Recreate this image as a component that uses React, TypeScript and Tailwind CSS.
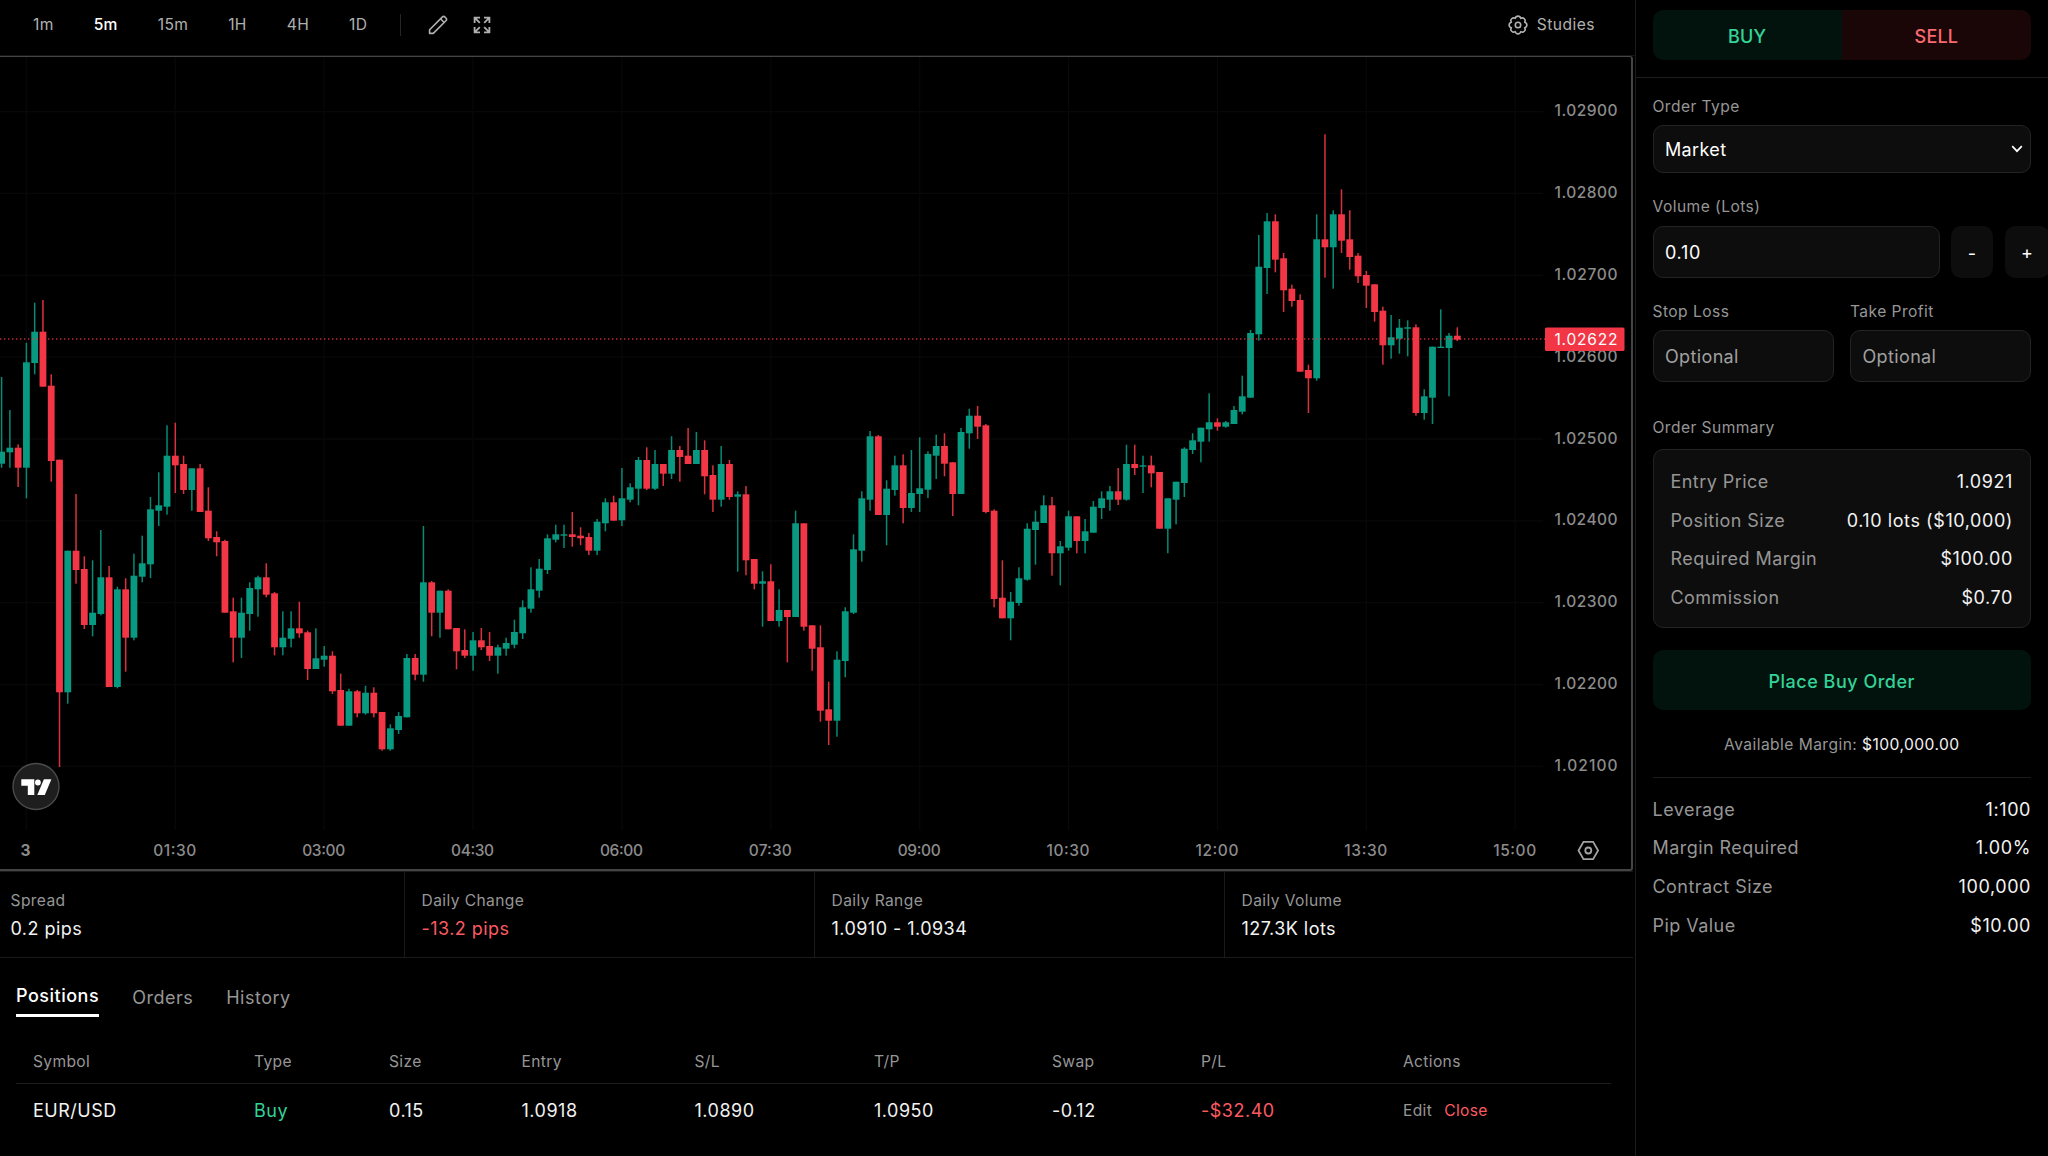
import { useState, type ReactNode } from 'react'
import clsx from 'clsx'

type Candle = [dir: 'u' | 'd', high: number, top: number, bottom: number, low: number]

// wick and body edges on the chart canvas, one entry per 5 minute bar
const CANDLES: Candle[] = [
  ['u', 377, 451.7, 463.7, 467.7],
  ['u', 410, 447.7, 452.3, 467.7],
  ['d', 444.3, 447.7, 467.7, 487],
  ['u', 342.7, 362.3, 467.7, 498.3],
  ['u', 302.7, 331.7, 363, 374.3],
  ['d', 300, 331.7, 386.7, 386.7],
  ['d', 374.3, 385.7, 461, 481.7],
  ['d', 459.7, 459.7, 692.3, 767],
  ['u', 550.7, 550.7, 692.3, 703.7],
  ['d', 494, 550.7, 570, 583.7],
  ['d', 556.3, 569, 625, 629],
  ['u', 560.3, 612.7, 625, 636.3],
  ['u', 530, 577.3, 614, 615.3],
  ['d', 566, 577.3, 687, 687],
  ['u', 586.7, 589.3, 687, 688.3],
  ['d', 578.3, 589.3, 637.7, 671.7],
  ['u', 553.7, 575.7, 637.7, 640.3],
  ['u', 535.7, 563.3, 576.7, 582.3],
  ['u', 497, 509.3, 564.3, 578],
  ['u', 472.3, 505.3, 510.7, 526],
  ['u', 425.3, 455.7, 506.7, 514.7],
  ['d', 422.7, 455.7, 465.3, 493],
  ['d', 455.7, 464, 490, 494],
  ['u', 468.3, 468.3, 490, 510.7],
  ['d', 464, 468.3, 512, 512],
  ['d', 487.3, 510.7, 538.3, 541],
  ['d', 531.3, 537, 542.3, 556.3],
  ['d', 539.7, 541, 612.7, 612.7],
  ['d', 597.7, 611.3, 637.7, 662.3],
  ['u', 597.7, 612.7, 637.7, 658],
  ['u', 582.3, 588, 614, 630.7],
  ['u', 575.7, 577.3, 589.3, 616.7],
  ['d', 563.3, 577.3, 594.7, 597.3],
  ['d', 592, 593.3, 647.3, 655.3],
  ['u', 611.3, 637.7, 647.3, 655.3],
  ['u', 611.3, 628.3, 638.7, 647.3],
  ['d', 601.7, 628.3, 633.3, 637.7],
  ['d', 630.7, 632.3, 669, 680],
  ['u', 628.3, 658.3, 669, 669],
  ['u', 646, 655.7, 659.7, 666.7],
  ['d', 651.3, 655.7, 691.3, 694],
  ['d', 673.7, 690, 725.7, 725.7],
  ['u', 688.7, 691.3, 725.7, 725.7],
  ['d', 690, 691.3, 713.3, 717.3],
  ['u', 685.7, 692.7, 713.3, 714.7],
  ['d', 687.3, 692.7, 713.3, 717.3],
  ['d', 712, 712, 749.3, 750.7],
  ['u', 724.3, 728.3, 749.3, 750.7],
  ['u', 712, 716, 730, 734],
  ['u', 654, 658, 717.3, 717.3],
  ['d', 654, 658, 674.7, 680.3],
  ['u', 526, 582.3, 674.7, 681.7],
  ['d', 581, 582.3, 612.7, 636.3],
  ['u', 590.7, 590.7, 612.7, 637.7],
  ['d', 589.3, 590.7, 629.3, 629.3],
  ['d', 628, 628, 651.3, 669.3],
  ['d', 629.3, 650, 655.7, 658],
  ['u', 632, 640.3, 655.7, 670.7],
  ['d', 628, 640.3, 647.3, 650],
  ['d', 632, 646, 655.7, 661],
  ['u', 644.7, 647.3, 655.7, 673.7],
  ['u', 637.7, 643, 648.7, 655.7],
  ['u', 619.7, 632, 644.7, 648.3],
  ['u', 600.3, 607.3, 633.3, 639],
  ['u', 567.3, 589.3, 608.7, 612.7],
  ['u', 559, 568.7, 590.7, 597.7],
  ['u', 534.3, 538.3, 570, 574],
  ['u', 524.7, 534.3, 539.7, 542.3],
  ['u', 524.7, 534.3, 535.7, 548],
  ['d', 512, 534.3, 537, 546.7],
  ['d', 527.3, 535.7, 538.3, 545.3],
  ['d', 533, 537, 550.7, 555],
  ['u', 519, 521.7, 550.7, 555],
  ['u', 498.3, 502.3, 523.3, 531.3],
  ['d', 495.7, 502.3, 520.7, 520.7],
  ['u', 468, 498.3, 520.3, 526],
  ['u', 483.3, 487.3, 499.7, 502.3],
  ['u', 457, 460, 488.7, 505.3],
  ['d', 447.3, 460, 488.7, 490],
  ['u', 450, 464, 488.7, 490],
  ['d', 464, 464, 473.7, 486],
  ['u', 436.3, 450, 473.7, 479],
  ['d', 446, 450, 457, 481.7],
  ['d', 428, 455.7, 464, 464],
  ['u', 432, 450, 464, 464],
  ['d', 440.3, 450, 476.3, 494.3],
  ['d', 465.3, 475, 499.7, 512],
  ['u', 446, 464, 499.7, 506.7],
  ['d', 460, 464, 497, 499.7],
  ['u', 491.3, 494.3, 496.7, 571.7],
  ['d', 486, 494.3, 560.3, 575.3],
  ['d', 559, 559, 583.7, 589.3],
  ['u', 571.3, 581.3, 583.7, 626.7],
  ['d', 564.3, 581.3, 621, 621],
  ['u', 589.3, 610, 621, 626.7],
  ['d', 610, 610, 617, 662.3],
  ['u', 510.7, 523.3, 617, 617],
  ['d', 523.3, 523.3, 626.7, 630.7],
  ['d', 625.3, 625.3, 648.7, 670.7],
  ['d', 625.3, 647.3, 710.7, 721.7],
  ['d', 681.7, 709.3, 720.7, 745],
  ['u', 651.3, 659.7, 720.7, 736.7],
  ['u', 607.3, 611.3, 661, 677.3],
  ['u', 534.3, 549.3, 612.7, 614],
  ['u', 491.3, 498.3, 550.7, 561.7],
  ['u', 431, 436.3, 499.7, 510.7],
  ['d', 435, 436.3, 515, 515],
  ['u', 480.3, 488.7, 515, 545.3],
  ['u', 455.7, 465.3, 490, 495.7],
  ['d', 454.3, 465.3, 508, 523.3],
  ['u', 450, 493, 508, 512],
  ['u', 437.3, 488.3, 494, 512],
  ['u', 451.3, 454, 489.7, 498],
  ['u', 434.7, 446, 455.7, 479],
  ['d', 433.3, 446, 463.7, 476.3],
  ['d', 462.3, 462.3, 494, 516],
  ['u', 428, 432, 494, 494],
  ['u', 408.7, 415.7, 433.3, 448.7],
  ['d', 406, 415.7, 426.7, 439],
  ['d', 424, 425.3, 512, 513.3],
  ['d', 509.3, 510.7, 599, 607.3],
  ['d', 560.3, 597.7, 618.3, 618.3],
  ['u', 592, 601.7, 618.3, 640.3],
  ['u', 567.3, 578.3, 603, 605.7],
  ['u', 523.3, 528.7, 579.7, 580.7],
  ['u', 510.7, 521.7, 530, 564.7],
  ['u', 495.3, 505.3, 523, 523],
  ['d', 497, 505.3, 553.3, 575.7],
  ['u', 541, 546.3, 553.3, 585.3],
  ['u', 510.7, 516.3, 547.7, 550.7],
  ['d', 516.3, 516.3, 541, 553.3],
  ['u', 519, 531.3, 541, 553.3],
  ['u', 501, 506.7, 532.7, 532.7],
  ['u', 491.3, 498.3, 508, 519],
  ['u', 486, 491.3, 499.7, 510.7],
  ['d', 468, 491.3, 499.7, 505],
  ['u', 444.7, 464, 499.7, 500.7],
  ['d', 444.7, 464, 468, 475],
  ['u', 455.7, 465.3, 466.7, 493],
  ['d', 455.7, 465.3, 473.3, 487.3],
  ['d', 472, 472, 528.7, 528.7],
  ['u', 498.3, 498.3, 528.7, 553.3],
  ['u', 481.7, 481.7, 499.7, 524.3],
  ['u', 447.3, 448.7, 483, 497],
  ['u', 433.3, 440.3, 450, 454],
  ['u', 427.7, 427.7, 441.7, 462.3],
  ['u', 393.3, 422.3, 429.3, 441.7],
  ['d', 418.3, 422.3, 426.7, 430.7],
  ['u', 421, 422.3, 426.7, 427.7],
  ['u', 406, 410, 424, 424],
  ['u', 375.7, 396.3, 411.7, 414.3],
  ['u', 330, 333, 397.7, 397.7],
  ['u', 235, 266.7, 334.3, 340.7],
  ['u', 213, 221.3, 268, 294],
  ['d', 214.3, 221.3, 259.7, 272.3],
  ['d', 253, 258.3, 290.3, 312],
  ['d', 284.7, 288.7, 301, 306.7],
  ['d', 294.3, 300, 371.7, 371.7],
  ['d', 364.7, 370, 378.3, 413],
  ['u', 214.3, 239.3, 378.3, 380.7],
  ['d', 134.3, 239.3, 247.3, 277.7],
  ['u', 210.3, 214.3, 247.3, 288.7],
  ['d', 189.3, 214.3, 240.7, 253],
  ['d', 210.3, 239.3, 257, 269.7],
  ['d', 253, 255.7, 276.3, 283],
  ['d', 271, 275, 285.7, 308],
  ['d', 284.3, 284.3, 312, 321.7],
  ['d', 306.7, 310.7, 345.3, 364.7],
  ['u', 315, 337.3, 345.3, 358.7],
  ['u', 319, 327.7, 338.7, 353.7],
  ['u', 320.3, 327.3, 328.7, 356.3],
  ['d', 324.3, 327.3, 413, 415.7],
  ['u', 389.3, 396.3, 413, 419.7],
  ['u', 346.7, 346.7, 397.7, 424],
  ['u', 309.3, 346.7, 348, 348],
  ['u', 333, 335.7, 348, 396.3],
  ['d', 327.3, 335.7, 339.7, 341],
]

const FIRST_X = 1.6
const BAR_STEP = 8.271
const UP = '#089981'
const DOWN = '#f23645'

const PRICES = ['1.02900', '1.02800', '1.02700', '1.02600', '1.02500', '1.02400', '1.02300', '1.02200', '1.02100']
const TIMES = ['3', '01:30', '03:00', '04:30', '06:00', '07:30', '09:00', '10:30', '12:00', '13:30', '15:00']

const priceY = (i: number) => 111.6 + i * 81.85
const timeX = (i: number) => 26.4 + i * 148.88

const TIMEFRAMES = ['1m', '5m', '15m', '1H', '4H', '1D']

const STATS = [
  { label: 'Spread', value: '0.2 pips' },
  { label: 'Daily Change', value: '-13.2 pips', negative: true },
  { label: 'Daily Range', value: '1.0910 - 1.0934' },
  { label: 'Daily Volume', value: '127.3K lots' },
]

const SUMMARY = [
  ['Entry Price', '1.0921'],
  ['Position Size', '0.10 lots ($10,000)'],
  ['Required Margin', '$100.00'],
  ['Commission', '$0.70'],
]

const CONTRACT = [
  ['Leverage', '1:100'],
  ['Margin Required', '1.00%'],
  ['Contract Size', '100,000'],
  ['Pip Value', '$10.00'],
]

function PencilIcon() {
  return (
    <svg width="20" height="20" viewBox="0 0 20 20" fill="none" stroke="currentColor" strokeWidth="1.6" strokeLinejoin="round">
      <path d="M1.6 18.4V14.7L14.2 2.1a2 2 0 0 1 2.8 0l.9.9a2 2 0 0 1 0 2.8L5.3 18.4H1.6Z" />
      <path d="M12.5 3.8l3.7 3.7" />
    </svg>
  )
}

function ExpandIcon() {
  return (
    <svg width="18" height="18" viewBox="0 0 18 18" fill="none" stroke="currentColor" strokeWidth="1.8">
      <path d="M1.6 7V1.6H7M1.6 1.6 6.8 6.8" />
      <path d="M11 1.6h5.4V7M16.4 1.6l-5.2 5.2" />
      <path d="M1.6 11v5.4H7M1.6 16.4l5.2-5.2" />
      <path d="M11 16.4h5.4V11M16.4 16.4l-5.2-5.2" />
    </svg>
  )
}

function GearIcon() {
  return (
    <svg width="20" height="20" viewBox="0 0 20 20" fill="none" stroke="currentColor" strokeWidth="1.6" strokeLinejoin="round">
      <path d="M16.65 12.75A2.82 2.82 0 0 1 12.75 16.65A2.82 2.82 0 0 1 7.25 16.65A2.82 2.82 0 0 1 3.35 12.75A2.82 2.82 0 0 1 3.35 7.25A2.82 2.82 0 0 1 7.25 3.35A2.82 2.82 0 0 1 12.75 3.35A2.82 2.82 0 0 1 16.65 7.25A2.82 2.82 0 0 1 16.65 12.75Z" />
      <circle cx="10" cy="10" r="2.7" />
    </svg>
  )
}

function PriceChart() {
  return (
    <svg width="1631" height="812" viewBox="0 57 1631 812" className="block">
      <g stroke="#080808" strokeWidth="1.3">
        {PRICES.map((p, i) => (
          <line key={p} x1="0" x2="1543" y1={priceY(i)} y2={priceY(i)} />
        ))}
        {TIMES.map((t, i) => (
          <line key={t} x1={timeX(i)} x2={timeX(i)} y1="57" y2="830" />
        ))}
      </g>

      {CANDLES.map(([dir, high, top, bottom, low], i) => {
        const x = FIRST_X + i * BAR_STEP
        const color = dir === 'u' ? UP : DOWN
        return (
          <g key={i} fill={color}>
            <rect x={x - 0.75} y={high} width="1.5" height={low - high} opacity="0.9" />
            <rect x={x - 3.4} y={top} width="6.8" height={bottom - top} />
          </g>
        )
      })}

      <line x1="0" x2="1545" y1="339" y2="339" stroke={DOWN} strokeWidth="1.4" strokeDasharray="1.4 2.6" opacity="0.8" />

      <g fill="#8c8c8c" fontSize="15.5" fontWeight="500">
        {PRICES.map((p, i) => (
          <text key={p} x="1554.5" y={priceY(i) + 4.6} textLength="63">
            {p}
          </text>
        ))}
        {TIMES.map((t, i) =>
          i === 0 ? (
            <text key={t} x={timeX(i) - 0.8} y="856.4" textAnchor="middle" fontWeight="700">
              {t}
            </text>
          ) : (
            <text key={t} x={timeX(i) - 22} y="856.4" textLength="43">
              {t}
            </text>
          ),
        )}
      </g>

      <rect x="1545" y="327.5" width="79.5" height="23.5" rx="1.5" fill={DOWN} />
      <text x="1554.5" y="345" textLength="63" fontSize="15.5" fill="#fff">
        1.02622
      </text>

      <g fill="none" stroke="#a3a3a3" strokeWidth="1.8">
        <path d="M1583.5 841.8h9.6l5 8.700-5 8.700h-9.600l-5-8.700Z" />
        <circle cx="1588.3" cy="850.5" r="3" />
      </g>

      <circle cx="36" cy="786.5" r="23" fill="#1e1e1e" stroke="#4a4a4a" strokeWidth="1.4" />
      <g fill="#fff">
        <path d="M21.3 779.3h13v15.7h-6.5v-9.3h-6.5Z" />
        <circle cx="37.9" cy="782.5" r="2.9" />
        <path d="M43.9 779.3h7.5l-6.6 15.7h-7.5Z" />
      </g>
    </svg>
  )
}

function Row({ label, value }: { label: string; value: string }) {
  return (
    <div className="flex h-[38.6px] items-center justify-between text-[18px]">
      <span className="tracking-[0.025em] text-[#969696]">{label}</span>
      <span className="tracking-[0.032em] text-[#f2f2f2]">{value}</span>
    </div>
  )
}

function FieldLabel({ children }: { children: ReactNode }) {
  return <label className="block h-5 text-[15.6px] leading-5 tracking-[0.028em] text-[#969696]">{children}</label>
}

function OrderPanel() {
  return (
    <aside className="flex w-[413px] shrink-0 flex-col border-l border-[#1c1c1c]">
      <div className="h-[78px] border-b border-[#1c1c1c] pt-2.5 pl-[16.5px]">
        <div className="flex h-[50px] w-[378.5px] overflow-hidden rounded-[10px] text-[18px] font-medium tracking-[0.01em]">
          <button className="flex-1 bg-[#02130d] pt-[2px] text-[#34d399]">BUY</button>
          <button className="flex-1 bg-[#1b0607] pt-[2px] text-[#fb6a70]">SELL</button>
        </div>
      </div>

      <div className="flex flex-col pt-[19px] pl-[16.5px]">
        <FieldLabel>Order Type</FieldLabel>
        <button className="mt-2 flex h-[48px] w-[378.5px] items-center justify-between rounded-[10px] border border-[#232323] bg-[#0d0d0d] pr-[7px] pl-[11.5px] text-[18px] tracking-[0.02em] text-white">
          Market
          <svg width="12" height="8" viewBox="0 0 12 8" fill="none" stroke="currentColor" strokeWidth="1.7">
            <path d="M1.2 1.2 6 6.2l4.8-5" />
          </svg>
        </button>

        <div className="mt-6">
          <FieldLabel>Volume (Lots)</FieldLabel>
        </div>
        <div className="mt-[9px] flex gap-[11.5px] text-[18px] text-white">
          <div className="flex h-[52px] w-[287px] shrink-0 items-center rounded-[10px] border border-[#232323] bg-[#0d0d0d] pt-px pl-[11.5px] tracking-[0.04em]">
            0.10
          </div>
          <button className="h-[52px] w-[42px] shrink-0 rounded-[10px] bg-[#0d0d0d] pt-[2px]">-</button>
          <button className="h-[52px] w-[45px] shrink-0 rounded-[10px] bg-[#0d0d0d] pt-px">+</button>
        </div>

        <div className="mt-6 grid w-[378.5px] grid-cols-2 gap-[16.5px]">
          {['Stop Loss', 'Take Profit'].map((label) => (
            <div key={label}>
              <FieldLabel>{label}</FieldLabel>
              <div className="mt-2 flex h-[52px] items-center rounded-[10px] border border-[#232323] bg-[#0d0d0d] pt-px pl-[11.5px] text-[18px] tracking-[0.02em] text-[#a0a0a0]">
                Optional
              </div>
            </div>
          ))}
        </div>

        <div className="mt-[36px]">
          <FieldLabel>Order Summary</FieldLabel>
        </div>
        <div className="mt-[11px] flex h-[179px] w-[378.5px] flex-col justify-center rounded-[10px] border border-[#232323] bg-[#0d0d0d] px-[17px] pt-[2px]">
          {SUMMARY.map(([label, value]) => (
            <Row key={label} label={label} value={value} />
          ))}
        </div>

        <button className="mt-[22px] h-[60px] w-[378.5px] rounded-[10px] bg-[#02130d] pt-[2px] text-[18px] font-medium tracking-[0.028em] text-[#34d399]">
          Place Buy Order
        </button>

        <p className="mt-[25px] w-[378.5px] text-center text-[15.6px] leading-5 tracking-[0.028em] text-[#969696]">
          Available Margin: <span className="text-[#f2f2f2]">$100,000.00</span>
        </p>

        <div className="mt-[22px] w-[378.5px] border-t border-[#1c1c1c] pt-3">
          {CONTRACT.map(([label, value]) => (
            <Row key={label} label={label} value={value} />
          ))}
        </div>
      </div>
    </aside>
  )
}

export default function App() {
  const [timeframe, setTimeframe] = useState('5m')
  const [tab, setTab] = useState('Positions')

  return (
    <div className="flex h-[1156px] w-[2048px] overflow-hidden bg-black font-[Inter,sans-serif] text-[#f2f2f2]">
      <main className="flex w-[1635px] shrink-0 flex-col">
        <header className="flex h-14 shrink-0 items-center border-b border-[#161616] pb-[5px] text-[15.6px] tracking-[0.02em] text-[#b0b0b0]">
          <div className="flex gap-10 pl-[33px]">
            {TIMEFRAMES.map((tf) => (
              <button key={tf} onClick={() => setTimeframe(tf)} className={clsx(tf === timeframe && 'font-medium text-white')}>
                {tf}
              </button>
            ))}
          </div>
          <div className="ml-[33px] h-[22px] w-px bg-[#262626]" />
          <button className="ml-[27px]">
            <PencilIcon />
          </button>
          <button className="ml-[25px]">
            <ExpandIcon />
          </button>
          <button className="mr-[40px] ml-auto flex items-center gap-[9px] tracking-[0.03em]">
            <GearIcon />
            Studies
          </button>
        </header>

        <section className="h-[815px] w-[1633px] shrink-0 rounded-r-[3px] border-t border-r-2 border-b-2 border-[#444]">
          <PriceChart />
        </section>

        <section className="grid h-[87px] w-[1633px] shrink-0 grid-cols-[405px_410px_410px_1fr] border-y border-[#1a1a1a]">
          {STATS.map((stat, i) => (
            <div key={stat.label} className={clsx('pt-[19px]', i === 0 ? 'pl-[10.5px]' : 'pl-[16.5px]', i < 3 && 'border-r border-[#1a1a1a]')}>
              <div className="text-[15.6px] leading-5 tracking-[0.025em] text-[#969696]">{stat.label}</div>
              <div className={clsx('mt-1.5 text-[18px] leading-6 tracking-[0.025em]', stat.negative && 'text-[#fb5a62]')}>{stat.value}</div>
            </div>
          ))}
        </section>

        <section className="px-4 pt-6">
          <nav className="flex items-start gap-[33px] text-[18px] tracking-[0.028em]">
            {['Positions', 'Orders', 'History'].map((name) => (
              <button
                key={name}
                onClick={() => setTab(name)}
                className={clsx('leading-7', name === tab ? 'border-b-[3px] border-white pb-1 font-medium text-white' : 'pt-0.5 text-[#969696]')}
              >
                {name}
              </button>
            ))}
          </nav>

          <table className="mt-[22px] w-[1595px] table-fixed text-left">
            <colgroup>
              <col className="w-[221px]" />
              <col className="w-[135px]" />
              <col className="w-[132.5px]" />
              <col className="w-[173px]" />
              <col className="w-[179.5px]" />
              <col className="w-[178px]" />
              <col className="w-[149px]" />
              <col className="w-[202px]" />
              <col />
            </colgroup>
            <thead>
              <tr className="h-[44px] border-b border-[#1c1c1c] text-[15.6px] tracking-[0.022em] text-[#969696]">
                {['Symbol', 'Type', 'Size', 'Entry', 'S/L', 'T/P', 'Swap', 'P/L', 'Actions'].map((h) => (
                  <th key={h} className="pt-[2px] pl-[17px] font-normal">
                    {h}
                  </th>
                ))}
              </tr>
            </thead>
            <tbody>
              <tr className="h-[54px] text-[18px] tracking-[0.028em] [&>td]:pl-[17px]">
                <td>EUR/USD</td>
                <td className="text-[#34d399]">Buy</td>
                <td>0.15</td>
                <td>1.0918</td>
                <td>1.0890</td>
                <td>1.0950</td>
                <td>-0.12</td>
                <td className="text-[#fb5a62]">-$32.40</td>
                <td>
                  <div className="flex gap-3 text-[15.6px] tracking-[0.022em]">
                    <button className="text-[#969696]">Edit</button>
                    <button className="text-[#fb5a62]">Close</button>
                  </div>
                </td>
              </tr>
            </tbody>
          </table>
        </section>
      </main>

      <OrderPanel />
    </div>
  )
}
